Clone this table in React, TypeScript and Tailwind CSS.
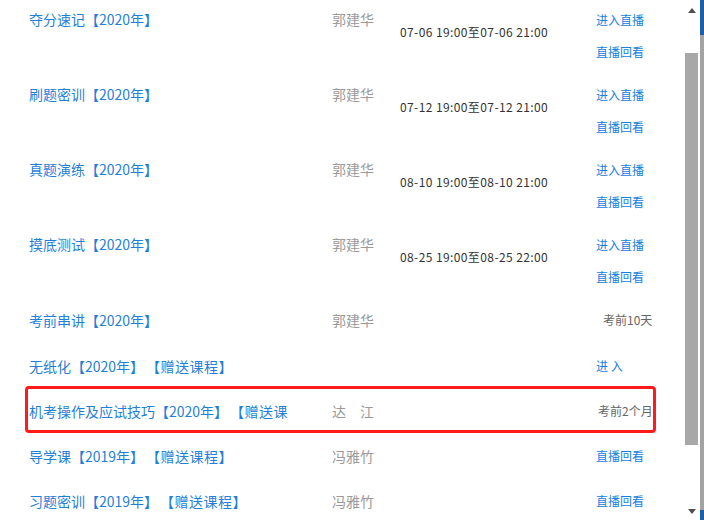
import React from "react";

const font = { fontFamily: '"Noto Sans CJK SC", "Noto Sans", sans-serif' };

type Live = { title: string; teacher: string; time: string };

const liveRows: Live[] = [
  { title: "夺分速记【2020年】", teacher: "郭建华", time: "07-06 19:00至07-06 21:00" },
  { title: "刷题密训【2020年】", teacher: "郭建华", time: "07-12 19:00至07-12 21:00" },
  { title: "真题演练【2020年】", teacher: "郭建华", time: "08-10 19:00至08-10 21:00" },
  { title: "摸底测试【2020年】", teacher: "郭建华", time: "08-25 19:00至08-25 22:00" },
];

function LiveRow({ r }: { r: Live }) {
  return (
    <div className="flex h-[75px]">
      <div className="w-[332px] pl-[29px] pt-[14px] text-[14px] leading-[20px] text-[#1f7fd9] whitespace-nowrap">
        {r.title}
      </div>
      <div className="w-[68px] pt-[14px] text-[14px] leading-[20px] text-[#9a9a9a]">{r.teacher}</div>
      <div className="w-[196px] flex items-center pb-[1px] text-[12px] tracking-[0.4px] leading-[20px] text-[#333]">
        {r.time}
      </div>
      <div className="flex flex-col pt-[9px] text-[12px] leading-[32px] text-[#1680e0]">
        <span>进入直播</span>
        <span>直播回看</span>
      </div>
    </div>
  );
}

function SimpleRow({
  title,
  extra,
  teacher,
  right,
  rightClass,
  rowClass = "h-[45px]",
  boxed = false,
}: {
  title: string;
  extra?: string;
  teacher: string;
  right: string;
  rightClass: string;
  rowClass?: string;
  boxed?: boolean;
}) {
  return (
    <div className={`relative flex items-center ${rowClass}`}>
      <div className="w-[332px] pl-[29px] text-[14px] leading-[20px] text-[#1f7fd9] whitespace-nowrap flex">
        <span>{title}</span>
        {extra && <span className="ml-[2px] tracking-[0.5px]">{extra}</span>}
      </div>
      <div className="w-[68px] text-[14px] leading-[20px] text-[#9a9a9a] whitespace-pre">{teacher}</div>
      <div className="w-[196px]" />
      <div className={`text-[12px] leading-[20px] whitespace-pre ${rightClass}`}>{right}</div>
      {boxed && (
        <div className="absolute left-[25px] top-[-2px] w-[631px] h-[47px] border-[3px] border-[#ff1b1b] rounded-[4px] pointer-events-none" />
      )}
    </div>
  );
}

export default function App() {
  return (
    <div className="w-[704px] h-[520px] overflow-hidden bg-white flex" style={font}>
      <div className="w-[683px] h-[520px] overflow-hidden">
        <div className="-mt-[5px]">
          {liveRows.map((r) => (
            <LiveRow key={r.title} r={r} />
          ))}
          <SimpleRow
            title="考前串讲【2020年】"
            teacher="郭建华"
            right="考前10天"
            rightClass="pl-[7px] text-[#666]"
            rowClass="h-[48px] pt-[2px]"
          />
          <SimpleRow title="无纸化【2020年】" extra="【赠送课程】" teacher="" right="进 入" rightClass="text-[#1680e0]" />
          <SimpleRow
            title="机考操作及应试技巧【2020年】"
            extra="【赠送课"
            teacher="达　江"
            right="考前2个月"
            rightClass="pl-[2px] text-[#666]"
            boxed
          />
          <SimpleRow title="导学课【2019年】" extra="【赠送课程】" teacher="冯雅竹" right="直播回看" rightClass="text-[#1680e0]" />
          <SimpleRow title="习题密训【2019年】" extra="【赠送课程】" teacher="冯雅竹" right="直播回看" rightClass="text-[#1680e0]" />
        </div>
      </div>
      {/* scrollbar */}
      <div className="w-[17px] h-[520px] flex flex-col bg-white">
        <div className="h-[53px] flex justify-center pt-[8px] pl-[1px]">
          <svg width="8" height="5" viewBox="0 0 8 5">
            <path d="M0 5 L4 0 L8 5 Z" fill="#505050" />
          </svg>
        </div>
        <div className="h-[392px] pl-[2px] pr-[2px]">
          <div className="w-[13px] h-full bg-[#a8a8a8]" />
        </div>
        <div className="flex-1 flex items-end justify-center pb-[6px] pl-[1px]">
          <svg width="8" height="5" viewBox="0 0 8 5">
            <path d="M0 0 L8 0 L4 5 Z" fill="#505050" />
          </svg>
        </div>
      </div>
      {/* background strip */}
      <div className="w-[4px] h-[520px] flex flex-col bg-[#a3a3a3]">
        <div className="h-[35px] bg-[#1d5fa6]" />
        <div className="flex-1" />
        <div className="h-[10px] bg-[#1d5fa6]" />
      </div>
    </div>
  );
}
